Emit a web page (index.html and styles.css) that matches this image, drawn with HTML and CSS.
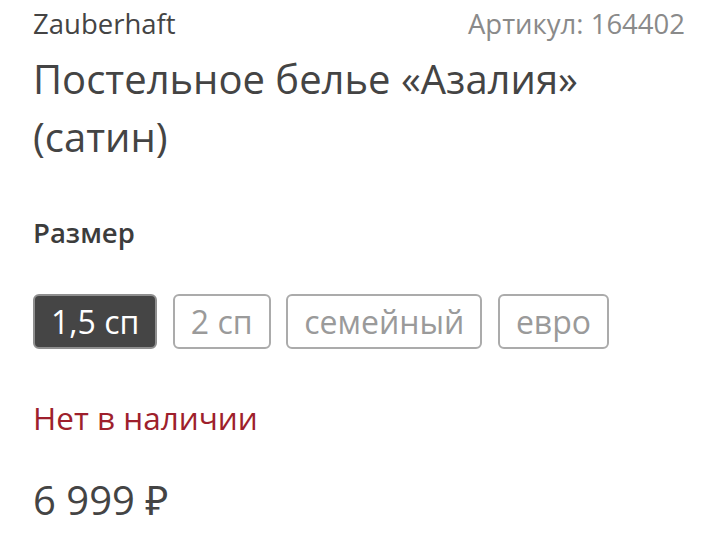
FILE: index.html
```html
<!DOCTYPE html>
<html lang="ru">
<head>
<meta charset="utf-8">
<link rel="stylesheet" href="styles.css">
</head>
<body>
<div class="product">
  <div class="meta">
    <span class="brand">Zauberhaft</span>
    <span class="sku">Артикул: 164402</span>
  </div>
  <h1 class="title">Постельное белье «Азалия» (сатин)</h1>
  <div class="size-label">Размер</div>
  <div class="sizes">
    <button class="size size-active">1,5 сп</button>
    <button class="size">2 сп</button>
    <button class="size">семейный</button>
    <button class="size">евро</button>
  </div>
  <div class="stock">Нет в наличии</div>
  <div class="price">6 999 ₽</div>
</div>
</body>
</html>
```

FILE: styles.css
```css
html, body {
  margin: 0;
  padding: 0;
  background: #fff;
}
body {
  font-family: "Open Sans", "Noto Sans", sans-serif;
  color: #444;
}
.product {
  padding: 4px 35px 0 33px;
  width: 720px;
  box-sizing: border-box;
}
.meta {
  display: flex;
  justify-content: space-between;
  align-items: baseline;
  font-size: 27.5px;
  line-height: 40px;
}
.brand {
  color: #444;
}
.sku {
  color: #8a8a8a;
}
.title {
  margin: 5.5px 0 0;
  font-size: 40px;
  font-weight: 400;
  line-height: 58px;
  color: #444;
  width: 600px;
}
.size-label {
  margin-top: 49px;
  font-size: 27.5px;
  font-weight: 600;
  line-height: 36px;
  color: #3c3c3c;
}
.sizes {
  display: flex;
  gap: 15.5px;
  margin-top: 43px;
}
.size {
  font-family: inherit;
  font-size: 32px;
  line-height: 51px;
  padding: 0 16px;
  border: 2px solid #ababab;
  border-radius: 6px;
  background: #fff;
  color: #9a9a9a;
  margin: 0;
}
.size-active {
  background: #454545;
  border-color: #8f8f8f;
  color: #fff;
}
.stock {
  margin-top: 47px;
  font-size: 31.5px;
  line-height: 44px;
  color: #9e1f2c;
}
.price {
  margin-top: 34.5px;
  font-size: 40px;
  line-height: 52px;
  color: #444;
}
```
